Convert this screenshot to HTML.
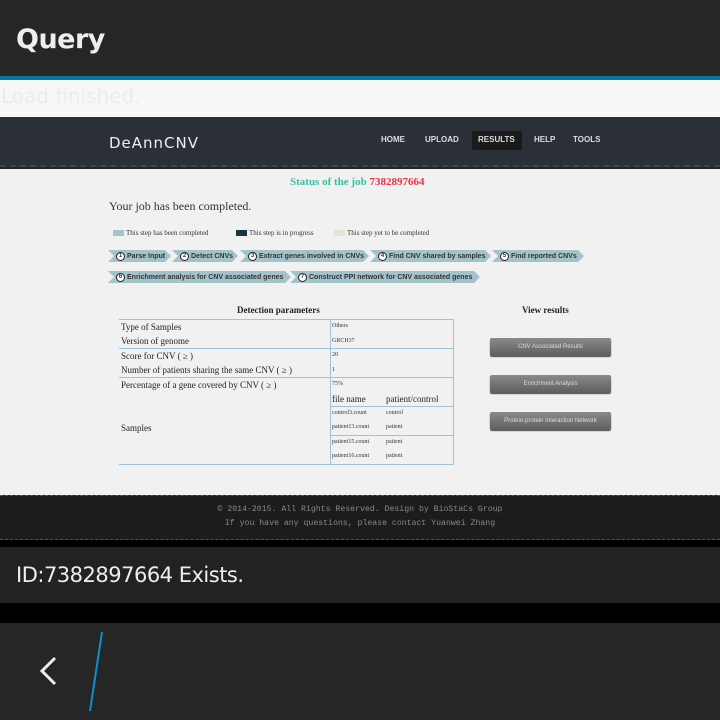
<!DOCTYPE html>
<html><head><meta charset="utf-8"><style>
*{margin:0;padding:0;box-sizing:border-box}
body{width:720px;height:720px;background:#262626;position:relative;overflow:hidden;font-family:"Liberation Sans",sans-serif}
.abs{position:absolute}
.serif{font-family:"Liberation Serif",serif}
.step{position:absolute;height:12px;background:#a3c3cb;clip-path:polygon(0 0,calc(100% - 6px) 0,100% 50%,calc(100% - 6px) 100%,0 100%,6px 50%);font:bold 7px "Liberation Sans",sans-serif;color:#333;padding-left:8px;white-space:nowrap;display:flex;align-items:center}
.step b{flex-shrink:0;display:inline-block;width:9px;height:9px;border-radius:50%;background:#fff;border:1px solid #222;font-size:6px;line-height:7px;text-align:center;margin-right:2px}
.t{position:absolute;font:9px "Liberation Serif",serif;color:#222}
.s{position:absolute;font:6px "Liberation Serif",serif;color:#333}
.lg{position:absolute;font:7px "Liberation Serif",serif;color:#333}
.btn{position:absolute;left:490px;width:121px;height:18px;background:linear-gradient(#8a8a8a,#5e5e5e);border-radius:2px;color:#ddd;font-size:6px;text-align:center;line-height:18px;box-shadow:0 1px 1px #444}
.hl{position:absolute;height:1px;background:#9cc4dc}
.vl{position:absolute;width:1px;background:#9cc4dc}
</style></head><body>
<div class="abs" style="left:0;top:0;width:720px;height:76px;background:#262626"></div>
<div class="abs" style="left:16px;top:24px;font-size:27px;font-weight:bold;color:#eee;font-family:'DejaVu Sans',sans-serif;letter-spacing:-0.5px">Query</div>
<div class="abs" style="left:0;top:76px;width:720px;height:4px;background:#0a73a6"></div>
<div class="abs" style="left:0;top:80px;width:720px;height:37px;background:#f7f7f7"></div>
<div class="abs" style="left:1px;top:84px;font-size:20px;color:#ececec;font-family:'DejaVu Sans',sans-serif">Load finished.</div>
<div class="abs" style="left:0;top:117px;width:720px;height:50px;background:#2a2f38;border-bottom:2px dashed #444"></div>
<div class="abs" style="left:109px;top:134px;font-size:15px;color:#eee;letter-spacing:1px;font-family:'DejaVu Sans',sans-serif">DeAnnCNV</div>
<div class="abs" style="left:472px;top:131px;width:50px;height:19px;background:#1a1a1a;border-radius:2px"></div>
<div class="abs" style="left:381px;top:135px;font-size:8px;font-weight:bold;color:#ddd">HOME</div>
<div class="abs" style="left:425px;top:135px;font-size:8px;font-weight:bold;color:#ddd">UPLOAD</div>
<div class="abs" style="left:478px;top:135px;font-size:8px;font-weight:bold;color:#ddd">RESULTS</div>
<div class="abs" style="left:534px;top:135px;font-size:8px;font-weight:bold;color:#ddd">HELP</div>
<div class="abs" style="left:573px;top:135px;font-size:8px;font-weight:bold;color:#ddd">TOOLS</div>
<div class="abs" style="left:0;top:169px;width:720px;height:326px;background:#f1f1f1"></div>
<div class="abs serif" style="left:290px;top:176px;font-size:11px;font-weight:bold;color:#3cbfa0">Status of the job <span style="color:#e8344a">7382897664</span></div>
<div class="abs serif" style="left:109px;top:199px;font-size:12px;color:#333">Your job has been completed.</div>
<div class="abs" style="left:113px;top:230px;width:11px;height:6px;background:#a3c3cb"></div>
<div class="lg" style="left:126px;top:229px">This step has been completed</div>
<div class="abs" style="left:236px;top:230px;width:11px;height:6px;background:#1a3540"></div>
<div class="lg" style="left:249px;top:229px">This step is in progress</div>
<div class="abs" style="left:334px;top:230px;width:11px;height:6px;background:#e6e3d4"></div>
<div class="lg" style="left:347px;top:229px">This step yet to be completed</div>
<div class="step" style="left:108px;top:250px;width:63px"><b>1</b>Parse Input</div>
<div class="step" style="left:172px;top:250px;width:66px"><b>2</b>Detect CNVs</div>
<div class="step" style="left:240px;top:250px;width:129px"><b>3</b>Extract genes involved in CNVs</div>
<div class="step" style="left:370px;top:250px;width:121px"><b>4</b>Find CNV shared by samples</div>
<div class="step" style="left:492px;top:250px;width:92px"><b>5</b>Find reported CNVs</div>
<div class="step" style="left:108px;top:271px;width:183px"><b>6</b>Enrichment analysis for CNV associated genes</div>
<div class="step" style="left:290px;top:271px;width:190px"><b>7</b>Construct PPI network for CNV associated genes</div>
<div class="abs serif" style="left:237px;top:305px;font-size:9px;font-weight:bold;color:#222">Detection parameters</div>
<div class="abs serif" style="left:522px;top:305px;font-size:9px;font-weight:bold;color:#222">View results</div>
<div class="hl" style="left:119px;top:319px;width:335px"></div>
<div class="hl" style="left:119px;top:348px;width:335px"></div>
<div class="hl" style="left:119px;top:377px;width:335px"></div>
<div class="hl" style="left:330px;top:406px;width:124px"></div>
<div class="hl" style="left:330px;top:435px;width:124px"></div>
<div class="hl" style="left:119px;top:464px;width:335px"></div>
<div class="vl" style="left:330px;top:319px;height:146px"></div>
<div class="vl" style="left:453px;top:319px;height:146px"></div>
<div class="t" style="left:121px;top:322px">Type of Samples</div>
<div class="t" style="left:121px;top:336px">Version of genome</div>
<div class="t" style="left:121px;top:351px">Score for CNV ( ≥ )</div>
<div class="t" style="left:121px;top:365px">Number of patients sharing the same CNV ( ≥ )</div>
<div class="t" style="left:121px;top:380px">Percentage of a gene covered by CNV ( ≥ )</div>
<div class="t" style="left:121px;top:423px">Samples</div>
<div class="s" style="left:332px;top:323px">Others</div>
<div class="s" style="left:332px;top:338px">GRCH37</div>
<div class="s" style="left:332px;top:352px">20</div>
<div class="s" style="left:332px;top:367px">1</div>
<div class="s" style="left:332px;top:381px">75%</div>
<div class="t" style="left:332px;top:394px">file name</div>
<div class="t" style="left:386px;top:394px">patient/control</div>
<div class="s" style="left:332px;top:410px">control3.count</div><div class="s" style="left:386px;top:410px">control</div>
<div class="s" style="left:332px;top:424px">patient13.count</div><div class="s" style="left:386px;top:424px">patient</div>
<div class="s" style="left:332px;top:439px">patient15.count</div><div class="s" style="left:386px;top:439px">patient</div>
<div class="s" style="left:332px;top:453px">patient16.count</div><div class="s" style="left:386px;top:453px">patient</div>
<div class="btn" style="top:338px">CNV Associated Results</div>
<div class="btn" style="top:375px">Enrichment Analysis</div>
<div class="btn" style="top:412px">Protein-protein Interaction Network</div>
<div class="abs" style="left:0;top:495px;width:720px;height:45px;background:#1c1c1c;border-top:1px dashed #555;border-bottom:1px dashed #555"></div>
<div class="abs" style="left:0;top:505px;width:720px;text-align:center;font:8.2px 'Liberation Mono',monospace;color:#888">© 2014-2015. All Rights Reserved. Design by BioStaCs Group</div>
<div class="abs" style="left:0;top:519px;width:720px;text-align:center;font:8.2px 'Liberation Mono',monospace;color:#888">If you have any questions, please contact Yuanwei Zhang</div>
<div class="abs" style="left:0;top:540px;width:720px;height:7px;background:#000"></div>
<div class="abs" style="left:0;top:547px;width:720px;height:56px;background:#222"></div>
<div class="abs" style="left:16px;top:563px;font-size:21px;color:#eee;font-family:'DejaVu Sans',sans-serif;letter-spacing:-0.5px">ID:7382897664 Exists.</div>
<div class="abs" style="left:0;top:603px;width:720px;height:20px;background:#000"></div>
<div class="abs" style="left:0;top:623px;width:720px;height:97px;background:#262626"></div>
<svg class="abs" style="left:0;top:623px" width="120" height="97"><path d="M55 35 L42 48 L55 61" stroke="#eee" stroke-width="3" fill="none"/><path d="M102 9 L90 88" stroke="#0a8fd0" stroke-width="2"/></svg>
</body></html>
